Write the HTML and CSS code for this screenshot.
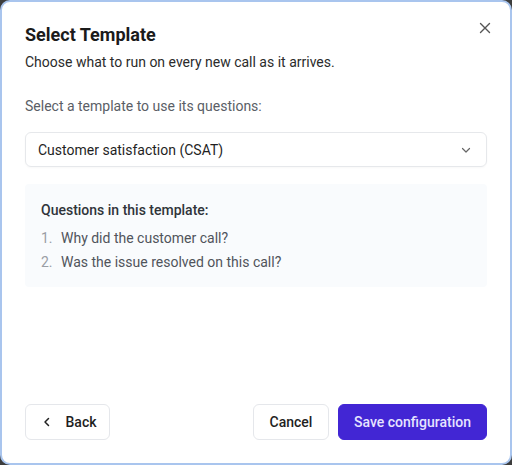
FILE: index.html
```html
<!DOCTYPE html>
<html lang="en">
<head>
<meta charset="utf-8">
<link rel="stylesheet" href="styles.css">
<title>Select Template</title>
</head>
<body>
<div class="dialog">
  <button class="close" aria-label="Close">
    <svg width="12" height="12" viewBox="0 0 12 12"><path d="M1.5 1.5L10.5 10.5M10.5 1.5L1.5 10.5" stroke="#555" stroke-width="1.4" stroke-linecap="round"/></svg>
  </button>
  <h1 class="title">Select Template</h1>
  <p class="subtitle">Choose what to run on every new call as it arrives.</p>
  <p class="label">Select a template to use its questions:</p>
  <div class="select">
    <span>Customer satisfaction (CSAT)</span>
    <svg width="12" height="12" viewBox="0 0 12 12"><path d="M2.5 4.5L6 8L9.5 4.5" fill="none" stroke="#666" stroke-width="1.2" stroke-linecap="round" stroke-linejoin="round"/></svg>
  </div>
  <div class="questions">
    <div class="q-title">Questions in this template:</div>
    <ol class="q-list">
      <li><span class="num">1.</span><span>Why did the customer call?</span></li>
      <li><span class="num">2.</span><span>Was the issue resolved on this call?</span></li>
    </ol>
  </div>
  <div class="footer">
    <button class="btn back">
      <svg width="12" height="12" viewBox="0 0 12 12"><path d="M7.5 2.5L4 6L7.5 9.5" fill="none" stroke="#222" stroke-width="1.5" stroke-linecap="round" stroke-linejoin="round"/></svg>
      <span>Back</span>
    </button>
    <div class="actions">
      <button class="btn cancel">Cancel</button>
      <button class="btn primary">Save configuration</button>
    </div>
  </div>
</div>
</body>
</html>
```

FILE: styles.css
```css
* { box-sizing: border-box; }
html, body { margin: 0; padding: 0; }
body {
  background: #3d3d3d;
  width: 512px;
  height: 465px;
  font-family: Roboto, "Liberation Sans", sans-serif;
}
.dialog {
  position: relative;
  width: 512px;
  height: 465px;
  background: #fff;
  border: 2px solid #a9c5ee;
  border-radius: 10px;
  padding: 21px 23px 23px 23px;
  display: flex;
  flex-direction: column;
}
.close {
  position: absolute;
  top: 18px;
  right: 17px;
  width: 16px;
  height: 16px;
  padding: 0;
  border: 0;
  background: none;
  display: flex;
  align-items: center;
  justify-content: center;
}
.title {
  margin: 0;
  font-size: 18px;
  line-height: 24px;
  font-weight: 700;
  color: #1b1b1b;
}
.subtitle {
  margin: 5px 0 0;
  font-size: 14px;
  line-height: 20px;
  color: #2b2b2b;
}
.label {
  margin: 24px 0 0;
  font-size: 14px;
  line-height: 20px;
  color: #5a5e66;
}
.select {
  margin-top: 16px;
  height: 35px;
  border: 1px solid #e6e8eb;
  border-radius: 6px;
  padding: 0 14px 0 12px;
  display: flex;
  align-items: center;
  justify-content: space-between;
  font-size: 14px;
  color: #1f1f1f;
  box-shadow: 0 1px 2px rgba(0,0,0,0.03);
}
.questions {
  margin-top: 17px;
  height: 103px;
  background: #f9fbfd;
  border-radius: 4px;
  padding: 16px 16px;
}
.q-title {
  font-size: 14px;
  line-height: 20px;
  font-weight: 500;
  color: #30343a;
}
.q-list {
  list-style: none;
  margin: 6px 0 0;
  padding: 0;
}
.q-list li {
  display: flex;
  font-size: 14px;
  line-height: 24px;
  color: #50545b;
}
.num {
  width: 20px;
  color: #9a9ea5;
}
.footer {
  margin-top: auto;
  display: flex;
  justify-content: space-between;
  align-items: center;
}
.actions {
  display: flex;
  gap: 9px;
}
.btn {
  height: 36px;
  border-radius: 6px;
  font-family: inherit;
  font-size: 14px;
  font-weight: 500;
  white-space: nowrap;
  display: flex;
  align-items: center;
  justify-content: center;
  padding: 0 12px;
  cursor: pointer;
}
.back, .cancel {
  background: #fff;
  border: 1px solid #e5e7eb;
  color: #1f1f1f;
}
.back {
  width: 85px;
  gap: 13px;
  padding: 0 12px 0 14px;
}
.cancel { width: 76px; }
.primary {
  width: 149px;
  background: #4226d4;
  border: 1px solid #4226d4;
  color: #e6e4ff;
}
```
